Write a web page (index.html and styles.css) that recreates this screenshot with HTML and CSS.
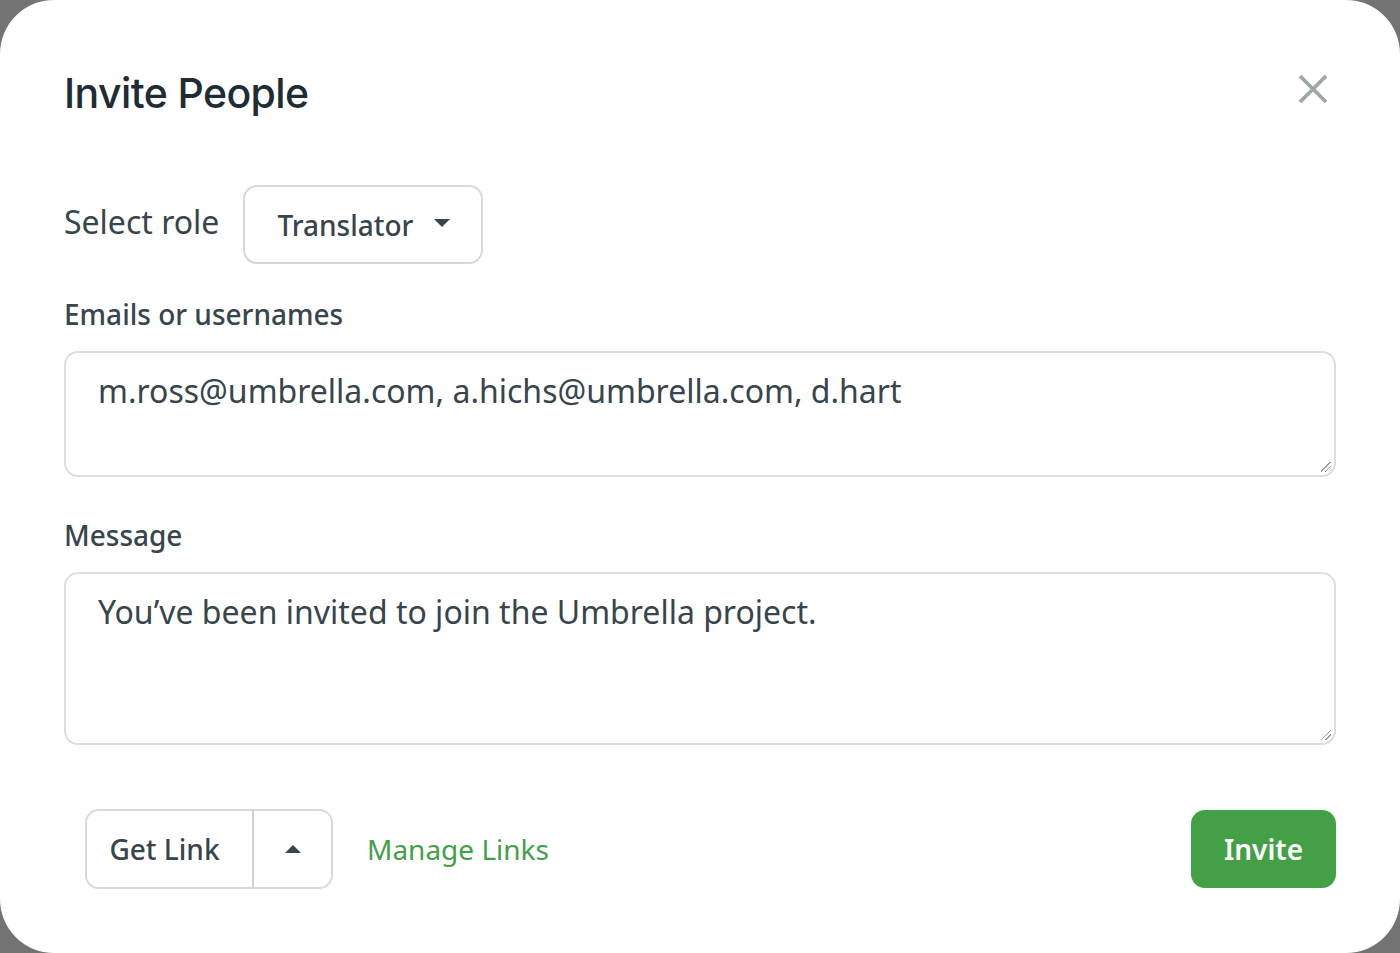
FILE: index.html
```html
<!DOCTYPE html>
<html lang="en">
<head>
<meta charset="utf-8">
<title>Invite People</title>
<link rel="stylesheet" href="styles.css">
</head>
<body>
<div class="modal">
  <header class="modal-header">
    <h1 class="title">Invite People</h1>
    <button class="close" aria-label="Close">
      <svg width="32" height="32" viewBox="0 0 32 32"><path d="M3 3 L29 29 M29 3 L3 29" stroke="#a0a5a8" stroke-width="3.8" stroke-linecap="butt" fill="none"/></svg>
    </button>
  </header>
  <div class="role-row">
    <span class="role-label">Select role</span>
    <button class="dropdown">Translator <span class="caret-down"></span></button>
  </div>
  <label class="field-label">Emails or usernames</label>
  <div class="textarea emails">m.ross@umbrella.com, a.hichs@umbrella.com, d.hart<span class="grip"></span></div>
  <label class="field-label second">Message</label>
  <div class="textarea message">You’ve been invited to join the Umbrella project.<span class="grip"></span></div>
  <footer class="modal-footer">
    <div class="split">
      <button class="split-main">Get Link</button>
      <button class="split-toggle"><span class="caret-up"></span></button>
    </div>
    <a class="manage" href="#">Manage Links</a>
    <button class="invite">Invite</button>
  </footer>
</div>
</body>
</html>
```
FILE: styles.css
```css
* { box-sizing: border-box; }
html, body { margin: 0; padding: 0; }
body {
  width: 1400px;
  height: 953px;
  background: #737373;
  font-family: "Noto Sans", "Open Sans", sans-serif;
  color: #37454c;
  overflow: hidden;
}
.modal {
  width: 1400px;
  height: 953px;
  background: #ffffff;
  border-radius: 54px;
  padding: 68px 64px 0 64px;
  display: flex;
  flex-direction: column;
}
.modal-header {
  display: flex;
  justify-content: space-between;
  align-items: flex-start;
}
.title {
  margin: 0;
  font-family: Inter, "Noto Sans", sans-serif;
  font-weight: 500;
  font-size: 41px;
  line-height: 50px;
  color: #1f2c33;
  letter-spacing: -0.6px;
}
.close {
  border: 0;
  background: none;
  padding: 0;
  margin: 5px 7px 0 0;
  width: 32px;
  height: 32px;
  cursor: pointer;
}
.close svg { display: block; }
.role-row {
  display: flex;
  align-items: center;
  gap: 24px;
  margin-top: 67px;
}
.role-label {
  font-size: 32px;
  line-height: 40px;
  color: #37454c;
  position: relative;
  top: -3px;
}
.dropdown {
  width: 240px;
  height: 79px;
  border: 2px solid #d6d9db;
  border-radius: 14px;
  background: #fff;
  font-family: inherit;
  font-size: 28px;
  font-weight: 500;
  color: #37454c;
  display: flex;
  align-items: center;
  padding: 0 0 0 32px;
  gap: 21px;
}
.caret-down {
  width: 0; height: 0;
  border-left: 8px solid transparent;
  border-right: 8px solid transparent;
  border-top: 8px solid #37454c;
  margin-top: -4px;
}
.field-label {
  display: block;
  font-size: 28px;
  font-weight: 500;
  line-height: 36px;
  margin-top: 32px;
  color: #37454c;
}
.field-label.second { margin-top: 40px; }
.textarea {
  position: relative;
  margin-top: 19px;
  border: 2px solid #dcdfe1;
  border-radius: 14px;
  padding: 16px 32px;
  font-size: 32px;
  line-height: 44px;
  color: #37454c;
}
.emails { height: 126px; }
.message { height: 173px; }
.grip {
  position: absolute;
  right: 3px;
  bottom: 3px;
  width: 10px;
  height: 10px;
  background: linear-gradient(135deg, transparent 0 45%, #9a9a9a 45% 52%, transparent 52% 68%, #9a9a9a 68% 75%, transparent 75%);
}
.modal-footer {
  display: flex;
  align-items: center;
  margin-top: 64px;
  padding-left: 21px;
}
.split {
  display: flex;
  height: 80px;
  border: 2px solid #d6d9db;
  border-radius: 14px;
  overflow: hidden;
}
.split button {
  border: 0;
  background: #fff;
  font-family: inherit;
  font-size: 28px;
  font-weight: 500;
  color: #37454c;
  height: 100%;
}
.split-main {
  width: 167px;
  border-right: 2px solid #d0d3d5 !important;
  padding: 0 10px 0 0;
}
.split-toggle {
  width: 77px;
  display: flex;
  align-items: center;
  justify-content: center;
}
.caret-up {
  width: 0; height: 0;
  border-left: 8px solid transparent;
  border-right: 8px solid transparent;
  border-bottom: 8px solid #37454c;
}
.manage {
  margin-left: 34px;
  font-size: 28px;
  color: #43a047;
  text-decoration: none;
}
.invite {
  margin-left: auto;
  width: 145px;
  height: 78px;
  background: #43a047;
  border: 0;
  border-radius: 14px;
  color: #fff;
  font-family: inherit;
  font-size: 28px;
  font-weight: 600;
}
```
